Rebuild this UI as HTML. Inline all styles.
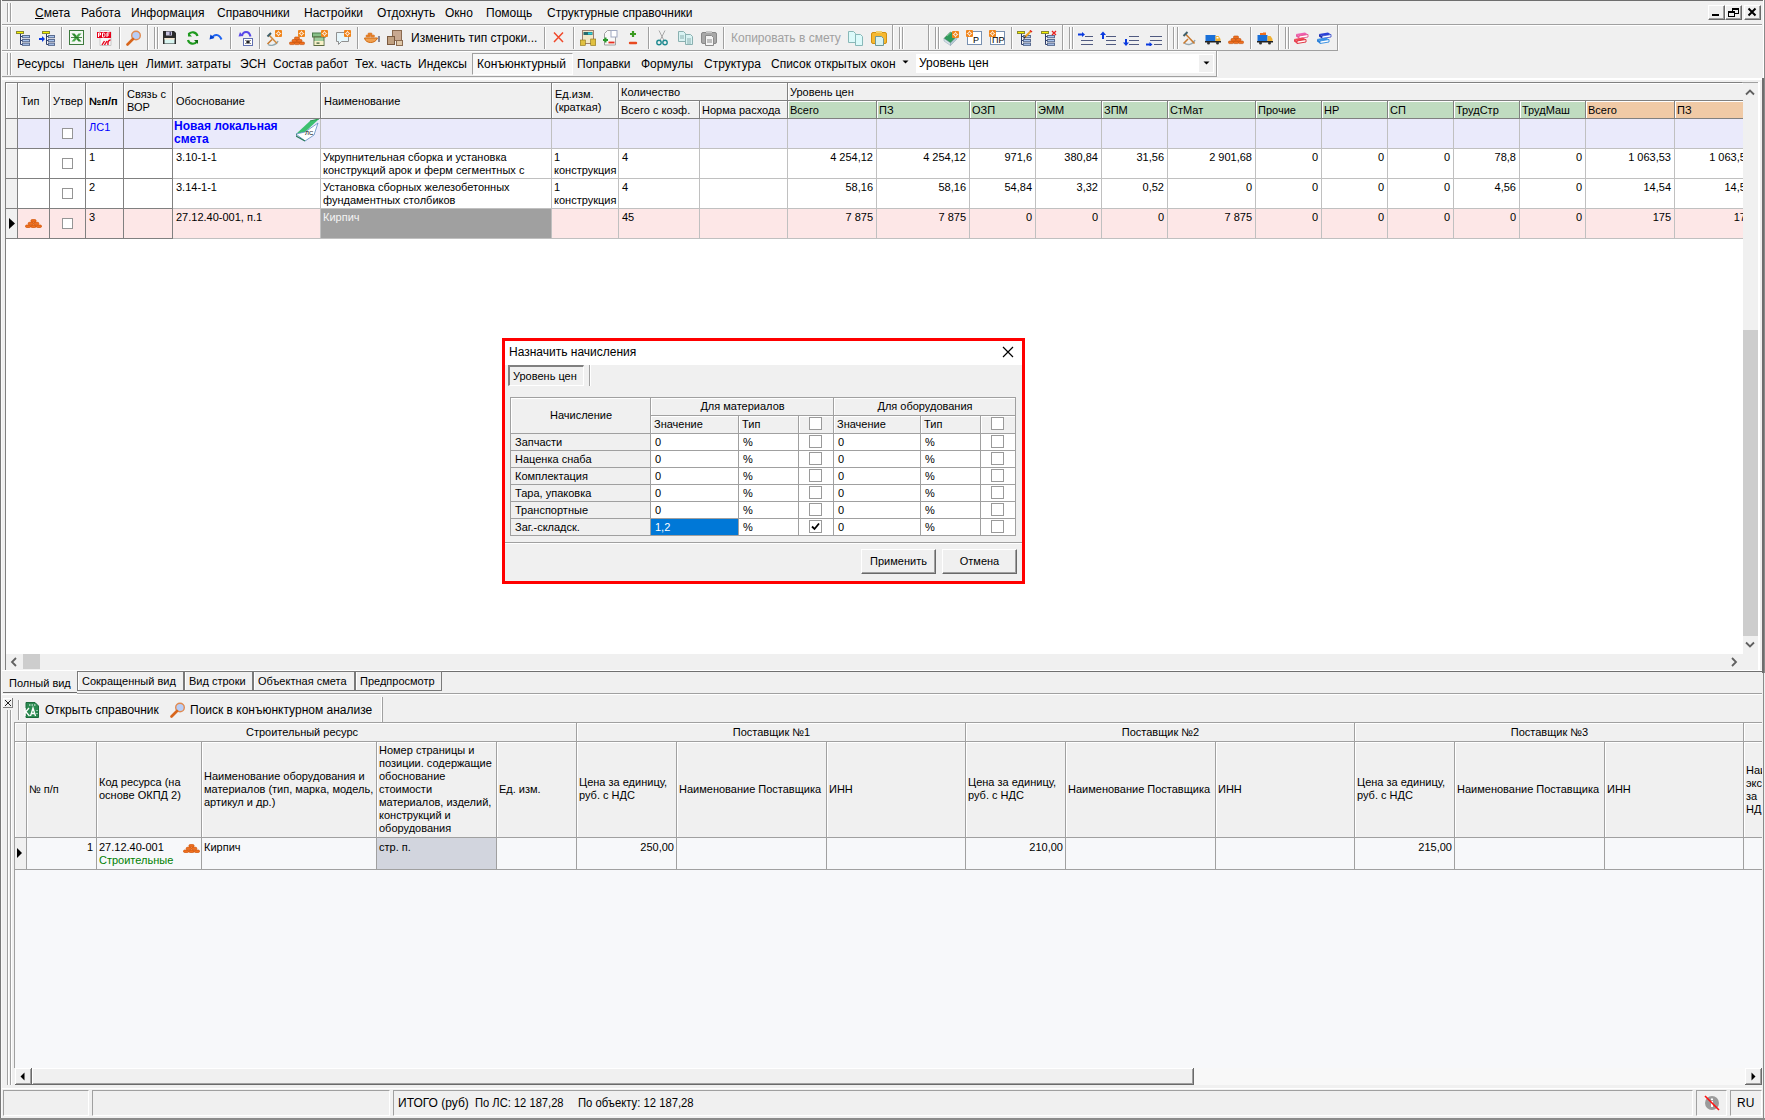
<!DOCTYPE html><html><head><meta charset="utf-8"><style>
*{box-sizing:border-box;margin:0;padding:0}
html,body{width:1765px;height:1120px;overflow:hidden;background:#f0f0f0;font-family:"Liberation Sans",sans-serif;color:#000}
.a{position:absolute}
.t12{font-size:12px;line-height:16px;white-space:nowrap}
.t11{font-size:11px;line-height:13px;white-space:nowrap}
.hl{position:absolute;height:1px}
.vl{position:absolute;width:1px}
.grip{position:absolute;width:2px;border-left:1px solid #a0a0a0;border-right:1px solid #fff}
.sep{position:absolute;width:2px;border-left:1px solid #a0a0a0;border-right:1px solid #fff}
.ic{position:absolute;width:16px;height:16px}
.hc{position:absolute;background:#f0f0f0;border-right:1px solid #808080;border-bottom:1px solid #808080;box-shadow:inset 1px 1px 0 #fff;overflow:hidden}
.dc{position:absolute;border-right:1px solid #c0c0c0;border-bottom:1px solid #c0c0c0;overflow:hidden}
.dk{border-color:#808080}
.lg{border-color:#a0a0a0 !important}
.cb{position:absolute;width:11px;height:11px;border:1px solid #959595;background:#fff}
</style></head><body>
<div class="a" style="left:0;top:0;width:1765px;height:1px;background:#6e6e6e"></div>
<div class="a" style="left:0;top:0;width:1px;height:1120px;background:#787878"></div>
<div class="a" style="left:1px;top:0;width:1px;height:1120px;background:#fafafa"></div>
<div class="grip" style="left:7px;top:3px;height:19px"></div>
<div class="grip" style="left:10px;top:3px;height:19px"></div>
<div class="a t12" style="left:35px;top:5px"><u>С</u>мета</div>
<div class="a t12" style="left:81px;top:5px">Работа</div>
<div class="a t12" style="left:131px;top:5px">Информация</div>
<div class="a t12" style="left:217px;top:5px">Справочники</div>
<div class="a t12" style="left:304px;top:5px">Настройки</div>
<div class="a t12" style="left:377px;top:5px">Отдохнуть</div>
<div class="a t12" style="left:445px;top:5px">Окно</div>
<div class="a t12" style="left:486px;top:5px">Помощь</div>
<div class="a t12" style="left:547px;top:5px">Структурные справочники</div>
<div class="a" style="left:1708px;top:5px;width:17px;height:15px;background:#f0f0f0;border-top:1px solid #fff;border-left:1px solid #fff;border-right:1px solid #6a6a6a;border-bottom:1px solid #6a6a6a;box-shadow:inset -1px -1px 0 #a0a0a0"></div>
<div class="a" style="left:1725px;top:5px;width:17px;height:15px;background:#f0f0f0;border-top:1px solid #fff;border-left:1px solid #fff;border-right:1px solid #6a6a6a;border-bottom:1px solid #6a6a6a;box-shadow:inset -1px -1px 0 #a0a0a0"></div>
<div class="a" style="left:1744px;top:5px;width:17px;height:15px;background:#f0f0f0;border-top:1px solid #fff;border-left:1px solid #fff;border-right:1px solid #6a6a6a;border-bottom:1px solid #6a6a6a;box-shadow:inset -1px -1px 0 #a0a0a0"></div>
<svg class="a" style="left:1708px;top:5px" width="17" height="15"><rect x="4" y="9" width="7" height="2" fill="#000"/></svg>
<svg class="a" style="left:1725px;top:5px" width="17" height="15"><rect x="7.5" y="3.5" width="6" height="5" fill="none" stroke="#000"/><rect x="7" y="3" width="7" height="2" fill="#000"/><rect x="3.5" y="6.5" width="6" height="5" fill="#f0f0f0" stroke="#000"/><rect x="3" y="6" width="7" height="2" fill="#000"/></svg>
<svg class="a" style="left:1744px;top:5px" width="17" height="15"><path d="M4.5 3.5 L11.5 10.5 M11.5 3.5 L4.5 10.5" stroke="#000" stroke-width="2"/></svg>
<div class="a" style="left:2px;top:24px;width:1760px;height:1px;background:#a0a0a0"></div>
<div class="a" style="left:2px;top:25px;width:1760px;height:1px;background:#fff"></div>
<div class="a" style="left:2px;top:50px;width:1336px;height:1px;background:#a0a0a0"></div>
<div class="a" style="left:2px;top:51px;width:1214px;height:1px;background:#fff"></div>
<div class="a" style="left:2px;top:76px;width:1215px;height:1px;background:#a0a0a0"></div>
<div class="a" style="left:2px;top:78px;width:1760px;height:2px;background:#fff"></div>
<div class="grip" style="left:7px;top:27px;height:22px"></div>
<div class="grip" style="left:10px;top:27px;height:22px"></div>
<svg class="a" style="left:16px;top:30px" width="16" height="16" viewBox="0 0 16 16"><rect x="0.5" y="1.5" width="7" height="2" fill="#f4f000" stroke="#8a8a30"/><path d="M4.5 4v10.5M4.5 6.5h2M4.5 10.5h2M4.5 14.5h2" stroke="#2e3e6a" fill="none"/><rect x="6.5" y="5.5" width="7" height="2.2" fill="#a9c4ee" stroke="#5a6c90"/><rect x="6.5" y="9.5" width="7" height="2.2" fill="#a9c4ee" stroke="#5a6c90"/><rect x="6.5" y="13.2" width="7" height="2.2" fill="#a9c4ee" stroke="#5a6c90"/></svg>
<svg class="a" style="left:39px;top:30px" width="16" height="16" viewBox="0 0 16 16"><path d="M0 9h4" stroke="#0a3ae0" stroke-width="2"/><path d="M3 6l3 3-3 3z" fill="#0a3ae0"/><rect x="3.5" y="1.5" width="7" height="2" fill="#f4f000" stroke="#8a8a30"/><path d="M7.5 4v10.5M7.5 6.5h2M7.5 10.5h2M7.5 14.5h2" stroke="#2e3e6a" fill="none"/><rect x="9.5" y="5.5" width="6" height="2.2" fill="#a9c4ee" stroke="#5a6c90"/><rect x="9.5" y="9.5" width="6" height="2.2" fill="#a9c4ee" stroke="#5a6c90"/><rect x="9.5" y="13.2" width="6" height="2.2" fill="#a9c4ee" stroke="#5a6c90"/></svg>
<div class="sep" style="left:61px;top:27px;height:22px"></div>
<svg class="a" style="left:69px;top:30px" width="16" height="16" viewBox="0 0 16 16"><rect x="0.5" y="0.5" width="14" height="14" fill="#f4f8f4" stroke="#3d7a3d"/><path d="M2.5 3.5h3l7 8h-3z" fill="#2f8a2f"/><path d="M12.5 3.5h-3l-7 8h3z" fill="#4aaa4a"/><path d="M2 7.5h11" stroke="#1a6a1a" stroke-width="0.8"/></svg>
<div class="sep" style="left:90px;top:27px;height:22px"></div>
<svg class="a" style="left:97px;top:30px" width="16" height="16" viewBox="0 0 16 16"><path d="M3 0.5h9l2 2v13H3z" fill="#f8f8f8" stroke="#c8c8c8"/><rect x="0" y="2" width="14" height="6" fill="#e8001a"/><path d="M1.5 7V3h2v2h-2M5.5 7V3h1.2c1 0 1.3 1 1.3 2s-.3 2-1.3 2zM10 7V3h2.5M10 5h2" stroke="#fff" stroke-width="1" fill="none"/><path d="M5 15l2.5-4M7.5 15l2.5-4M13.5 10c-2 0-3 2-2.5 5" stroke="#e8001a" stroke-width="1.4" fill="none"/></svg>
<div class="sep" style="left:119px;top:27px;height:22px"></div>
<svg class="a" style="left:126px;top:30px" width="16" height="16" viewBox="0 0 16 16"><circle cx="10" cy="5.5" r="4.3" fill="#b8cdf6" stroke="#e08a50" stroke-width="1.4"/><path d="M7 9l-5.5 5.5" stroke="#d8661c" stroke-width="2.6" stroke-linecap="round"/></svg>
<div class="sep" style="left:147px;top:25px;height:25px"></div>
<div class="grip" style="left:154px;top:27px;height:22px"></div>
<div class="grip" style="left:157px;top:27px;height:22px"></div>
<svg class="a" style="left:162px;top:30px" width="16" height="16" viewBox="0 0 16 16"><path d="M1 1h11l2 2v11H1z" fill="#2a2a2a"/><rect x="4" y="1.5" width="6" height="4" fill="#c8c4de"/><rect x="7.5" y="2" width="1.5" height="3" fill="#504c70"/><rect x="2.5" y="8" width="10" height="5.5" fill="#d8f4f0"/><rect x="2.5" y="8" width="10" height="1.5" fill="#f8e6d0"/></svg>
<svg class="a" style="left:185px;top:30px" width="16" height="16" viewBox="0 0 16 16"><path d="M12.5 6A5 5 0 0 0 3.5 4.5" stroke="#1e9a1e" stroke-width="2.2" fill="none"/><path d="M3 2.5v4h4z" fill="#1e9a1e"/><path d="M3 10A5 5 0 0 0 12 11.5" stroke="#1e9a1e" stroke-width="2.2" fill="none"/><path d="M13 14v-4H9z" fill="#107010"/></svg>
<svg class="a" style="left:208px;top:30px" width="16" height="16" viewBox="0 0 16 16"><path d="M4 8C6 4 11 3.5 13.5 9.5" stroke="#1e64f0" stroke-width="2" fill="none"/><path d="M1.5 9.5l1-5 4 3.5z" fill="#0040d0"/></svg>
<div class="sep" style="left:230px;top:27px;height:22px"></div>
<svg class="a" style="left:238px;top:30px" width="16" height="16" viewBox="0 0 16 16"><path d="M4 6C5 1 11 0 12.5 6.5" stroke="#5848e8" stroke-width="2" fill="none"/><path d="M0.5 6.5l1.5-4.5 3 4z" fill="#5848e8"/><rect x="5.5" y="8.5" width="9" height="7" fill="#fff" stroke="#6070b0"/><path d="M7.5 10.5l5 3M12.5 10.5l-5 3M10 10v4" stroke="#101010" stroke-width="1"/></svg>
<div class="sep" style="left:259px;top:27px;height:22px"></div>
<svg class="a" style="left:266px;top:30px" width="16" height="16" viewBox="0 0 16 16"><path d="M2 14.5C4 16 10 16 12 11" stroke="#90a8b0" stroke-width="1.4" fill="none"/><path d="M1.5 14L6 9.5" stroke="#c87a30" stroke-width="1.6"/><path d="M3 5l8 8.5" stroke="#d08a40" stroke-width="1.6"/><path d="M1.5 6.5L5 3" stroke="#40606a" stroke-width="2"/><rect x="9" y="0" width="7" height="7" rx="1" fill="#f0841a"/><circle cx="12.5" cy="3.5" r="1.5" fill="none" stroke="#fff" stroke-width="0.9"/><path d="M12.5 0.8v1M12.5 5.2v1M9.8 3.5h1M14.2 3.5h1" stroke="#fff" stroke-width="0.8"/></svg>
<svg class="a" style="left:289px;top:30px" width="16" height="16" viewBox="0 0 16 16"><g fill="#f07020" stroke="#c04a00" stroke-width="0.6"><rect x="0.5" y="12" width="5" height="2.6" rx="1"/><rect x="5.5" y="12" width="5" height="2.6" rx="1"/><rect x="10.5" y="12" width="5" height="2.6" rx="1"/><rect x="3" y="9.5" width="5" height="2.6" rx="1"/><rect x="8" y="9.5" width="5" height="2.6" rx="1"/><rect x="5.5" y="7" width="5" height="2.6" rx="1"/></g><rect x="9" y="0" width="7" height="7" rx="1" fill="#f0841a"/><circle cx="12.5" cy="3.5" r="1.5" fill="none" stroke="#fff" stroke-width="0.9"/><path d="M12.5 0.8v1M12.5 5.2v1M9.8 3.5h1M14.2 3.5h1" stroke="#fff" stroke-width="0.8"/></svg>
<svg class="a" style="left:312px;top:30px" width="16" height="16" viewBox="0 0 16 16"><rect x="0.5" y="3" width="13" height="4" fill="#88c088" stroke="#4a7a4a"/><rect x="2" y="7" width="10" height="8.5" fill="#9ccc9c" stroke="#5a6a40"/><rect x="2.5" y="11" width="9" height="4" fill="#f8f0c8"/><rect x="4.5" y="12.5" width="3" height="1.2" fill="#305030"/><rect x="9" y="0" width="7" height="7" rx="1" fill="#f0841a"/><circle cx="12.5" cy="3.5" r="1.5" fill="none" stroke="#fff" stroke-width="0.9"/><path d="M12.5 0.8v1M12.5 5.2v1M9.8 3.5h1M14.2 3.5h1" stroke="#fff" stroke-width="0.8"/></svg>
<svg class="a" style="left:335px;top:30px" width="16" height="16" viewBox="0 0 16 16"><path d="M1.5 2.5h12v9h-7l-3 3v-3h-2z" fill="#e6f6fb" stroke="#909090"/><rect x="9" y="0" width="7" height="7" rx="1" fill="#f0841a"/><circle cx="12.5" cy="3.5" r="1.5" fill="none" stroke="#fff" stroke-width="0.9"/><path d="M12.5 0.8v1M12.5 5.2v1M9.8 3.5h1M14.2 3.5h1" stroke="#fff" stroke-width="0.8"/></svg>
<div class="sep" style="left:357px;top:27px;height:22px"></div>
<svg class="a" style="left:364px;top:30px" width="16" height="16" viewBox="0 0 16 16"><path d="M0.5 8c1 6 11 6 13 0z" fill="#f0a050" stroke="#d06a10"/><g fill="#f08a30" stroke="#c86010" stroke-width="0.5"><rect x="2" y="5" width="4" height="2" rx="0.8"/><rect x="6.5" y="5" width="4" height="2" rx="0.8"/><rect x="4" y="3" width="4" height="2" rx="0.8"/></g><path d="M15 6v6" stroke="#202040" stroke-width="1"/></svg>
<svg class="a" style="left:387px;top:30px" width="16" height="16" viewBox="0 0 16 16"><rect x="5.5" y="0.5" width="9" height="10" fill="#c8a890" stroke="#8a6a50"/><rect x="0.5" y="6.5" width="7" height="8" fill="#c0a080" stroke="#7a5a40"/><rect x="9.5" y="10.5" width="6" height="5" fill="#e0c8a8" stroke="#8a6a50"/></svg>
<div class="a t12" style="left:411px;top:30px">Изменить тип строки...</div>
<div class="sep" style="left:544px;top:27px;height:22px"></div>
<svg class="a" style="left:552px;top:30px" width="16" height="16" viewBox="0 0 16 16"><path d="M2 2.5l9 9.5M11 2.5l-9 9.5" stroke="#f0482a" stroke-width="1.5"/></svg>
<div class="sep" style="left:573px;top:27px;height:22px"></div>
<svg class="a" style="left:580px;top:30px" width="16" height="16" viewBox="0 0 16 16"><rect x="2.5" y="0.5" width="11" height="13" fill="#f2e8c8" stroke="#a08070"/><rect x="3.5" y="2" width="9" height="3" fill="#2a6a6a"/><rect x="8" y="2.5" width="4" height="2" fill="#30d0e0"/><g fill="#e0c040" stroke="#8a7010" stroke-width="0.6"><rect x="0.3" y="10" width="5" height="5.5"/><rect x="10.7" y="9" width="5" height="6.5"/></g></svg>
<svg class="a" style="left:603px;top:30px" width="16" height="16" viewBox="0 0 16 16"><path d="M1.5 3.5l3-3h8v14.5h-11z" fill="#f8f8f8" stroke="#a0a0a0"/><rect x="8" y="0.5" width="6" height="6.5" fill="#fff" stroke="#a0a8c0"/><path d="M0 10h5M2.5 7.5v5" stroke="#2a9a2a" stroke-width="2"/><path d="M5.5 12.5h6" stroke="#e83020" stroke-width="1.8"/></svg>
<svg class="a" style="left:625px;top:30px" width="16" height="16" viewBox="0 0 16 16"><path d="M8 1v6M5 4h6" stroke="#3a9a20" stroke-width="2.2"/><path d="M5 13h6" stroke="#e84a20" stroke-width="2.4" stroke-linecap="round"/></svg>
<div class="sep" style="left:648px;top:27px;height:22px"></div>
<svg class="a" style="left:654px;top:30px" width="16" height="16" viewBox="0 0 16 16"><path d="M5 0.5l5 10M11 0.5l-5 10" stroke="#a8a8a8" stroke-width="1"/><circle cx="5" cy="12.5" r="2.2" fill="none" stroke="#208a90" stroke-width="1.4"/><circle cx="11" cy="12.5" r="2.2" fill="none" stroke="#208a90" stroke-width="1.4"/></svg>
<svg class="a" style="left:678px;top:30px" width="16" height="16" viewBox="0 0 16 16"><path d="M0.5 1.5h5l2 2v8h-7z" fill="#d8f2f2" stroke="#8ab0b0"/><path d="M7.5 4.5h5l2 2v8h-7z" fill="#d8f2f2" stroke="#8ab0b0"/><path d="M9 9h4M9 11h4M9 13h4M2 6h4M2 8h4" stroke="#8ab0b0"/></svg>
<svg class="a" style="left:701px;top:30px" width="16" height="16" viewBox="0 0 16 16"><rect x="0.5" y="2.5" width="15" height="11" rx="1.5" fill="#a8a8a8" stroke="#888"/><rect x="5" y="1" width="6" height="2" fill="#c8c8c8"/><path d="M4.5 5.5h6l2 2v8h-8z" fill="#f4f4f4" stroke="#8a8a8a"/><path d="M6 10h5M6 12h5" stroke="#8a8a8a"/></svg>
<div class="sep" style="left:723px;top:27px;height:22px"></div>
<div class="a t12" style="left:731px;top:30px;color:#a0a0a0">Копировать в смету</div>
<svg class="a" style="left:848px;top:30px" width="16" height="16" viewBox="0 0 16 16"><path d="M0.5 1.5h5l2 2v9h-7z" fill="#dcfafa" stroke="#88b8b8"/><path d="M7.5 4.5h5l2 2v9h-7z" fill="#dcfafa" stroke="#88b8b8"/></svg>
<svg class="a" style="left:871px;top:30px" width="16" height="16" viewBox="0 0 16 16"><rect x="0.5" y="2.5" width="15" height="11" rx="1.5" fill="#f6b830" stroke="#d09010"/><rect x="5" y="1" width="6" height="2" fill="#f0d070"/><path d="M4.5 6.5h6l2 2v7h-8z" fill="#d8f2f2" stroke="#709898"/></svg>
<div class="sep" style="left:892px;top:25px;height:25px"></div>
<div class="grip" style="left:899px;top:27px;height:22px"></div>
<div class="grip" style="left:902px;top:27px;height:22px"></div>
<div class="sep" style="left:928px;top:25px;height:25px"></div>
<div class="grip" style="left:935px;top:27px;height:22px"></div>
<div class="grip" style="left:938px;top:27px;height:22px"></div>
<svg class="a" style="left:943px;top:30px" width="16" height="16" viewBox="0 0 16 16"><path d="M1 8.5L7.5 2 14 6.5 7.5 13z" fill="#2f9a5a" stroke="#1f6a3a" stroke-width="0.6"/><path d="M4 6l4-3.5" stroke="#7ac890" stroke-width="1"/><path d="M1 8.5l6.5 4.5v2.5L1 11z" fill="#d8e4ea" stroke="#8aa0b0" stroke-width="0.5"/><path d="M7.5 13L14 6.5V9l-6.5 6.5z" fill="#b8ccd6" stroke="#8aa0b0" stroke-width="0.5"/><rect x="9" y="1" width="7" height="7" rx="1" fill="#f0841a"/><circle cx="12.5" cy="4.5" r="1.5" fill="none" stroke="#fff" stroke-width="0.9"/><path d="M12.5 1.8v1M12.5 6.2v1M9.8 4.5h1M14.2 4.5h1" stroke="#fff" stroke-width="0.8"/></svg>
<svg class="a" style="left:966px;top:30px" width="16" height="16" viewBox="0 0 16 16"><rect x="1.5" y="1.5" width="14" height="13" fill="#fff" stroke="#7890b0"/><text x="7" y="13" font-size="9" font-family="Liberation Sans" fill="#000">P</text><rect x="0" y="0" width="7" height="7" rx="1" fill="#f0841a"/><circle cx="3.5" cy="3.5" r="1.5" fill="none" stroke="#fff" stroke-width="0.9"/><path d="M3.5 0.8v1M3.5 5.2v1M0.8 3.5h1M5.2 3.5h1" stroke="#fff" stroke-width="0.8"/></svg>
<svg class="a" style="left:989px;top:30px" width="16" height="16" viewBox="0 0 16 16"><rect x="1.5" y="1.5" width="14" height="13" fill="#fff" stroke="#7890b0"/><text x="3" y="13" font-size="9" font-family="Liberation Sans" fill="#000">ПР</text><rect x="0" y="0" width="7" height="7" rx="1" fill="#f0841a"/><circle cx="3.5" cy="3.5" r="1.5" fill="none" stroke="#fff" stroke-width="0.9"/><path d="M3.5 0.8v1M3.5 5.2v1M0.8 3.5h1M5.2 3.5h1" stroke="#fff" stroke-width="0.8"/></svg>
<div class="sep" style="left:1011px;top:27px;height:22px"></div>
<svg class="a" style="left:1017px;top:30px" width="16" height="16" viewBox="0 0 16 16"><rect x="0.5" y="1.5" width="7" height="2" fill="#f4f000" stroke="#8a8a30"/><path d="M4.5 4v10.5M4.5 6.5h2M4.5 10.5h2M4.5 14.5h2" stroke="#2e3e6a" fill="none"/><rect x="6.5" y="5.5" width="7" height="2.2" fill="#a9c4ee" stroke="#5a6c90"/><rect x="6.5" y="9.5" width="7" height="2.2" fill="#a9c4ee" stroke="#5a6c90"/><rect x="6.5" y="13.2" width="7" height="2.2" fill="#a9c4ee" stroke="#5a6c90"/><path d="M8 7l6-6" stroke="#f0a020" stroke-width="2"/><path d="M13 0.5l2 1.5" stroke="#e02020" stroke-width="1.5"/><path d="M7 8.5l1.5-2" stroke="#202020" stroke-width="1.2"/></svg>
<svg class="a" style="left:1041px;top:30px" width="16" height="16" viewBox="0 0 16 16"><rect x="0.5" y="1.5" width="7" height="2" fill="#f4f000" stroke="#8a8a30"/><path d="M4.5 4v10.5M4.5 6.5h2M4.5 10.5h2M4.5 14.5h2" stroke="#2e3e6a" fill="none"/><rect x="6.5" y="5.5" width="7" height="2.2" fill="#a9c4ee" stroke="#5a6c90"/><rect x="6.5" y="9.5" width="7" height="2.2" fill="#a9c4ee" stroke="#5a6c90"/><rect x="6.5" y="13.2" width="7" height="2.2" fill="#a9c4ee" stroke="#5a6c90"/><path d="M11 1l4 4M15 1l-4 4" stroke="#e82020" stroke-width="1.3"/></svg>
<div class="sep" style="left:1062px;top:25px;height:25px"></div>
<div class="grip" style="left:1069px;top:27px;height:22px"></div>
<div class="grip" style="left:1072px;top:27px;height:22px"></div>
<svg class="a" style="left:1077px;top:30px" width="16" height="16" viewBox="0 0 16 16"><path d="M1 4.5h5" stroke="#0a3ae0" stroke-width="2"/><path d="M5 2l3 2.5-3 2.5z" fill="#0a3ae0"/><path d="M8 6.5h8M4 10.5h12M4 14.5h12" stroke="#505a80" stroke-width="1.2"/></svg>
<svg class="a" style="left:1100px;top:30px" width="16" height="16" viewBox="0 0 16 16"><path d="M3 4v5" stroke="#0a3ae0" stroke-width="2"/><path d="M0 5l3-3.5 3 3.5z" fill="#0a3ae0"/><path d="M6 6.5h10M6 10.5h10M6 14.5h10" stroke="#505a80" stroke-width="1.2"/></svg>
<svg class="a" style="left:1123px;top:30px" width="16" height="16" viewBox="0 0 16 16"><path d="M3 9v4" stroke="#0a3ae0" stroke-width="2"/><path d="M0 12.5l3 3.5 3-3.5z" fill="#0a3ae0"/><path d="M6 6.5h10M6 10.5h10M6 14.5h10" stroke="#505a80" stroke-width="1.2"/></svg>
<svg class="a" style="left:1146px;top:30px" width="16" height="16" viewBox="0 0 16 16"><path d="M0 14.5h4" stroke="#0a3ae0" stroke-width="2"/><path d="M3.5 12l3 2.5-3 2.5z" fill="#0a3ae0"/><path d="M4 6.5h12M4 10.5h12M8 14.5h8" stroke="#505a80" stroke-width="1.2"/></svg>
<div class="sep" style="left:1167px;top:25px;height:25px"></div>
<div class="grip" style="left:1173px;top:27px;height:22px"></div>
<div class="grip" style="left:1177px;top:27px;height:22px"></div>
<svg class="a" style="left:1182px;top:30px" width="16" height="16" viewBox="0 0 16 16"><path d="M2.5 13C5 15.5 11 15 13 10" stroke="#98a8b0" stroke-width="1.4" fill="none"/><path d="M1.5 13.5L6 9" stroke="#c87a30" stroke-width="1.6"/><path d="M3.5 4l9 9.5" stroke="#c87a30" stroke-width="1.6"/><path d="M1.5 6L5.5 2" stroke="#40606a" stroke-width="2"/></svg>
<svg class="a" style="left:1205px;top:30px" width="16" height="16" viewBox="0 0 16 16"><rect x="0.5" y="5" width="10" height="6" fill="#1a70d8"/><path d="M10.5 6h3l2 3v2h-5z" fill="#f0b030"/><rect x="11.5" y="7" width="2" height="1.5" fill="#fff"/><rect x="0" y="11" width="16" height="1.5" fill="#202020"/><circle cx="3.5" cy="13" r="1.5" fill="#303030"/><circle cx="12.5" cy="13" r="1.5" fill="#303030"/></svg>
<svg class="a" style="left:1228px;top:30px" width="16" height="16" viewBox="0 0 16 16"><g fill="#f07020" stroke="#c04a00" stroke-width="0.6"><rect x="0.5" y="11" width="5" height="2.6" rx="1"/><rect x="5.5" y="11" width="5" height="2.6" rx="1"/><rect x="10.5" y="11" width="5" height="2.6" rx="1"/><rect x="3" y="8.5" width="5" height="2.6" rx="1"/><rect x="8" y="8.5" width="5" height="2.6" rx="1"/><rect x="5.5" y="6" width="5" height="2.6" rx="1"/></g></svg>
<div class="sep" style="left:1250px;top:27px;height:22px"></div>
<svg class="a" style="left:1257px;top:30px" width="16" height="16" viewBox="0 0 16 16"><rect x="0.5" y="5" width="10" height="6" fill="#1a70d8"/><g fill="#f07020"><rect x="3" y="3" width="3" height="2"/><rect x="6" y="2.5" width="3" height="2.5"/></g><path d="M10.5 6h3l2 3v2h-5z" fill="#f0b030"/><rect x="0" y="11" width="16" height="1.5" fill="#202020"/><circle cx="3.5" cy="13" r="1.5" fill="#303030"/><circle cx="12.5" cy="13" r="1.5" fill="#303030"/></svg>
<div class="sep" style="left:1278px;top:25px;height:25px"></div>
<div class="grip" style="left:1285px;top:27px;height:22px"></div>
<div class="grip" style="left:1288px;top:27px;height:22px"></div>
<svg class="a" style="left:1293px;top:30px" width="16" height="16" viewBox="0 0 16 16"><path d="M3 4l9-1.5 3 2-9 1.5z" fill="#f060b0"/><path d="M6 6l9-1.5v2.5l-9 1.5z" fill="#fff" stroke="#e04080" stroke-width="0.8"/><path d="M3 4l3 2v2.5l-3-2z" fill="#e85aa0"/><path d="M1 9l9-1.5 3 2-9 1.5z" fill="#f04858"/><path d="M4 11l9-1.5v2.5l-9 1.5z" fill="#fff" stroke="#e02030" stroke-width="0.9"/><path d="M1 9l3 2v2.5l-3-2z" fill="#e84050"/></svg>
<svg class="a" style="left:1316px;top:30px" width="16" height="16" viewBox="0 0 16 16"><path d="M3 4l9-1.5 3 2-9 1.5z" fill="#2a40d8"/><path d="M6 6l9-1.5v2.5l-9 1.5z" fill="#fff" stroke="#2a40c8" stroke-width="0.8"/><path d="M3 4l3 2v2.5l-3-2z" fill="#2030b0"/><path d="M1 9l9-1.5 3 2-9 1.5z" fill="#3a90e8"/><path d="M4 11l9-1.5v2.5l-9 1.5z" fill="#fff" stroke="#2a88e0" stroke-width="0.9"/><path d="M1 9l3 2v2.5l-3-2z" fill="#2a80d8"/></svg>
<div class="sep" style="left:1337px;top:25px;height:25px"></div>
<div class="grip" style="left:7px;top:53px;height:22px"></div>
<div class="grip" style="left:10px;top:53px;height:22px"></div>
<div class="a" style="left:472px;top:53px;width:101px;height:22px;background:#f8f8f8;border-top:1px solid #a0a0a0;border-left:1px solid #a0a0a0;border-right:1px solid #fff;border-bottom:1px solid #fff"></div>
<div class="a t12" style="left:17px;top:56px">Ресурсы</div>
<div class="a t12" style="left:73px;top:56px">Панель цен</div>
<div class="a t12" style="left:146px;top:56px">Лимит. затраты</div>
<div class="a t12" style="left:240px;top:56px">ЭСН</div>
<div class="a t12" style="left:273px;top:56px">Состав работ</div>
<div class="a t12" style="left:355px;top:56px">Тех. часть</div>
<div class="a t12" style="left:418px;top:56px">Индексы</div>
<div class="a t12" style="left:477px;top:56px">Конъюнктурный</div>
<div class="a t12" style="left:577px;top:56px">Поправки</div>
<div class="a t12" style="left:641px;top:56px">Формулы</div>
<div class="a t12" style="left:704px;top:56px">Структура</div>
<div class="a t12" style="left:771px;top:56px">Список открытых окон</div>
<svg class="a" style="left:902px;top:60px" width="8" height="5"><path d="M0.5 0.5h6l-3 3z" fill="#000"/></svg>
<div class="a" style="left:916px;top:54px;width:298px;height:19px;background:#fff"></div>
<div class="a t12" style="left:919px;top:55px">Уровень цен</div>
<div class="a" style="left:1199px;top:55px;width:14px;height:17px;background:#f0f0f0"></div>
<svg class="a" style="left:1203px;top:61px" width="8" height="5"><path d="M0.5 0.5h6l-3 3z" fill="#000"/></svg>
<div class="sep" style="left:1216px;top:51px;height:25px"></div>
<div class="a" style="left:2px;top:80px;width:1760px;height:592px;background:#f0f0f0"></div>
<div class="a" style="left:5px;top:82px;width:1738px;height:572px;background:#fff;border-left:1px solid #808080;border-top:1px solid #808080;overflow:hidden">
<div class="hc" style="left:0px;top:0px;width:12px;height:36px;background:#f0f0f0;"></div>
<div class="hc" style="left:12px;top:0px;width:32px;height:36px;background:#f0f0f0;"></div>
<div class="a t11" style="left:15px;top:12px;line-height:13px">Тип</div>
<div class="hc" style="left:44px;top:0px;width:36px;height:36px;background:#f0f0f0;"></div>
<div class="a t11" style="left:47px;top:12px;line-height:13px">Утвер</div>
<div class="hc" style="left:80px;top:0px;width:38px;height:36px;background:#f0f0f0;"></div>
<div class="a t11" style="left:83px;top:12px;line-height:13px"><b>№п/п</b></div>
<div class="hc" style="left:118px;top:0px;width:49px;height:36px;background:#f0f0f0;"></div>
<div class="a t11" style="left:121px;top:5px;line-height:13px">Связь с<br>ВОР</div>
<div class="hc" style="left:167px;top:0px;width:148px;height:36px;background:#f0f0f0;"></div>
<div class="a t11" style="left:170px;top:12px;line-height:13px">Обоснование</div>
<div class="hc" style="left:315px;top:0px;width:231px;height:36px;background:#f0f0f0;"></div>
<div class="a t11" style="left:318px;top:12px;line-height:13px">Наименование</div>
<div class="hc" style="left:546px;top:0px;width:67px;height:36px;background:#f0f0f0;"></div>
<div class="a t11" style="left:549px;top:5px;line-height:13px">Ед.изм.<br>(краткая)</div>
<div class="hc" style="left:613px;top:0px;width:169px;height:18px;background:#f0f0f0;"></div>
<div class="a t11" style="left:615px;top:3px;">Количество</div>
<div class="hc" style="left:613px;top:18px;width:81px;height:18px;background:#f0f0f0;"></div>
<div class="a t11" style="left:615px;top:21px;">Всего с коэф.</div>
<div class="hc" style="left:694px;top:18px;width:88px;height:18px;background:#f0f0f0;"></div>
<div class="a t11" style="left:696px;top:21px;">Норма расхода</div>
<div class="hc" style="left:782px;top:0px;width:1013px;height:18px;background:#f0f0f0;"></div>
<div class="a t11" style="left:784px;top:3px;">Уровень цен</div>
<div class="hc" style="left:782px;top:18px;width:89px;height:18px;background:#c0dcc0;"></div>
<div class="a t11" style="left:784px;top:21px;">Всего</div>
<div class="hc" style="left:871px;top:18px;width:93px;height:18px;background:#c0dcc0;"></div>
<div class="a t11" style="left:873px;top:21px;">ПЗ</div>
<div class="hc" style="left:964px;top:18px;width:66px;height:18px;background:#c0dcc0;"></div>
<div class="a t11" style="left:966px;top:21px;">ОЗП</div>
<div class="hc" style="left:1030px;top:18px;width:66px;height:18px;background:#c0dcc0;"></div>
<div class="a t11" style="left:1032px;top:21px;">ЭММ</div>
<div class="hc" style="left:1096px;top:18px;width:66px;height:18px;background:#c0dcc0;"></div>
<div class="a t11" style="left:1098px;top:21px;">ЗПМ</div>
<div class="hc" style="left:1162px;top:18px;width:88px;height:18px;background:#c0dcc0;"></div>
<div class="a t11" style="left:1164px;top:21px;">СтМат</div>
<div class="hc" style="left:1250px;top:18px;width:66px;height:18px;background:#c0dcc0;"></div>
<div class="a t11" style="left:1252px;top:21px;">Прочие</div>
<div class="hc" style="left:1316px;top:18px;width:66px;height:18px;background:#c0dcc0;"></div>
<div class="a t11" style="left:1318px;top:21px;">НР</div>
<div class="hc" style="left:1382px;top:18px;width:66px;height:18px;background:#c0dcc0;"></div>
<div class="a t11" style="left:1384px;top:21px;">СП</div>
<div class="hc" style="left:1448px;top:18px;width:66px;height:18px;background:#c0dcc0;"></div>
<div class="a t11" style="left:1450px;top:21px;">ТрудСтр</div>
<div class="hc" style="left:1514px;top:18px;width:66px;height:18px;background:#c0dcc0;"></div>
<div class="a t11" style="left:1516px;top:21px;">ТрудМаш</div>
<div class="hc" style="left:1580px;top:18px;width:89px;height:18px;background:#f0caa6;"></div>
<div class="a t11" style="left:1582px;top:21px;">Всего</div>
<div class="hc" style="left:1669px;top:18px;width:81px;height:18px;background:#f0caa6;"></div>
<div class="a t11" style="left:1671px;top:21px;">ПЗ</div>
<div class="dc dk" style="left:0px;top:36px;width:12px;height:30px;background:#f0f0f0;"></div>
<div class="dc dk" style="left:12px;top:36px;width:32px;height:30px;background:#eaeafb;"></div>
<div class="dc dk" style="left:44px;top:36px;width:36px;height:30px;background:#eaeafb;"></div>
<div class="dc dk" style="left:80px;top:36px;width:38px;height:30px;background:#eaeafb;"></div>
<div class="dc dk" style="left:118px;top:36px;width:49px;height:30px;background:#eaeafb;"></div>
<div class="dc" style="left:167px;top:36px;width:148px;height:30px;background:#eaeafb;"></div>
<div class="dc" style="left:315px;top:36px;width:231px;height:30px;background:#eaeafb;"></div>
<div class="dc" style="left:546px;top:36px;width:67px;height:30px;background:#eaeafb;"></div>
<div class="dc" style="left:613px;top:36px;width:81px;height:30px;background:#eaeafb;"></div>
<div class="dc" style="left:694px;top:36px;width:88px;height:30px;background:#eaeafb;"></div>
<div class="dc" style="left:782px;top:36px;width:89px;height:30px;background:#eaeafb;"></div>
<div class="dc" style="left:871px;top:36px;width:93px;height:30px;background:#eaeafb;"></div>
<div class="dc" style="left:964px;top:36px;width:66px;height:30px;background:#eaeafb;"></div>
<div class="dc" style="left:1030px;top:36px;width:66px;height:30px;background:#eaeafb;"></div>
<div class="dc" style="left:1096px;top:36px;width:66px;height:30px;background:#eaeafb;"></div>
<div class="dc" style="left:1162px;top:36px;width:88px;height:30px;background:#eaeafb;"></div>
<div class="dc" style="left:1250px;top:36px;width:66px;height:30px;background:#eaeafb;"></div>
<div class="dc" style="left:1316px;top:36px;width:66px;height:30px;background:#eaeafb;"></div>
<div class="dc" style="left:1382px;top:36px;width:66px;height:30px;background:#eaeafb;"></div>
<div class="dc" style="left:1448px;top:36px;width:66px;height:30px;background:#eaeafb;"></div>
<div class="dc" style="left:1514px;top:36px;width:66px;height:30px;background:#eaeafb;"></div>
<div class="dc" style="left:1580px;top:36px;width:89px;height:30px;background:#eaeafb;"></div>
<div class="dc" style="left:1669px;top:36px;width:81px;height:30px;background:#eaeafb;"></div>
<div class="cb" style="left:56px;top:45px"></div>
<div class="a t11" style="left:83px;top:38px;color:#0000ff">ЛС1</div>
<div class="a t11" style="left:168px;top:37px;color:#0000ff;font-size:12px;line-height:13px"><b>Новая локальная<br>смета</b></div>
<div class="dc dk" style="left:0px;top:66px;width:12px;height:30px;background:#f0f0f0;"></div>
<div class="dc dk" style="left:12px;top:66px;width:32px;height:30px;background:#fff;"></div>
<div class="dc dk" style="left:44px;top:66px;width:36px;height:30px;background:#fff;"></div>
<div class="dc dk" style="left:80px;top:66px;width:38px;height:30px;background:#fff;"></div>
<div class="dc dk" style="left:118px;top:66px;width:49px;height:30px;background:#fff;"></div>
<div class="dc" style="left:167px;top:66px;width:148px;height:30px;background:#fff;"></div>
<div class="dc" style="left:315px;top:66px;width:231px;height:30px;background:#fff;"></div>
<div class="dc" style="left:546px;top:66px;width:67px;height:30px;background:#fff;"></div>
<div class="dc" style="left:613px;top:66px;width:81px;height:30px;background:#fff;"></div>
<div class="dc" style="left:694px;top:66px;width:88px;height:30px;background:#fff;"></div>
<div class="dc" style="left:782px;top:66px;width:89px;height:30px;background:#fff;"></div>
<div class="dc" style="left:871px;top:66px;width:93px;height:30px;background:#fff;"></div>
<div class="dc" style="left:964px;top:66px;width:66px;height:30px;background:#fff;"></div>
<div class="dc" style="left:1030px;top:66px;width:66px;height:30px;background:#fff;"></div>
<div class="dc" style="left:1096px;top:66px;width:66px;height:30px;background:#fff;"></div>
<div class="dc" style="left:1162px;top:66px;width:88px;height:30px;background:#fff;"></div>
<div class="dc" style="left:1250px;top:66px;width:66px;height:30px;background:#fff;"></div>
<div class="dc" style="left:1316px;top:66px;width:66px;height:30px;background:#fff;"></div>
<div class="dc" style="left:1382px;top:66px;width:66px;height:30px;background:#fff;"></div>
<div class="dc" style="left:1448px;top:66px;width:66px;height:30px;background:#fff;"></div>
<div class="dc" style="left:1514px;top:66px;width:66px;height:30px;background:#fff;"></div>
<div class="dc" style="left:1580px;top:66px;width:89px;height:30px;background:#fff;"></div>
<div class="dc" style="left:1669px;top:66px;width:81px;height:30px;background:#fff;"></div>
<div class="cb" style="left:56px;top:75px"></div>
<div class="a t11" style="left:83px;top:68px;">1</div>
<div class="a t11" style="left:170px;top:68px;">3.10-1-1</div>
<div class="a t11" style="left:317px;top:68px;line-height:13px;color:#000">Укрупнительная сборка и установка<br>конструкций арок и ферм сегментных с</div>
<div class="a t11" style="left:548px;top:68px;line-height:13px">1<br>конструкция</div>
<div class="a t11" style="left:616px;top:68px;">4</div>
<div class="a t11" style="left:667px;width:200px;top:68px;text-align:right;">4 254,12</div>
<div class="a t11" style="left:760px;width:200px;top:68px;text-align:right;">4 254,12</div>
<div class="a t11" style="left:826px;width:200px;top:68px;text-align:right;">971,6</div>
<div class="a t11" style="left:892px;width:200px;top:68px;text-align:right;">380,84</div>
<div class="a t11" style="left:958px;width:200px;top:68px;text-align:right;">31,56</div>
<div class="a t11" style="left:1046px;width:200px;top:68px;text-align:right;">2 901,68</div>
<div class="a t11" style="left:1112px;width:200px;top:68px;text-align:right;">0</div>
<div class="a t11" style="left:1178px;width:200px;top:68px;text-align:right;">0</div>
<div class="a t11" style="left:1244px;width:200px;top:68px;text-align:right;">0</div>
<div class="a t11" style="left:1310px;width:200px;top:68px;text-align:right;">78,8</div>
<div class="a t11" style="left:1376px;width:200px;top:68px;text-align:right;">0</div>
<div class="a t11" style="left:1465px;width:200px;top:68px;text-align:right;">1 063,53</div>
<div class="a t11" style="left:1546px;width:200px;top:68px;text-align:right;">1 063,53</div>
<div class="dc dk" style="left:0px;top:96px;width:12px;height:30px;background:#f0f0f0;"></div>
<div class="dc dk" style="left:12px;top:96px;width:32px;height:30px;background:#fff;"></div>
<div class="dc dk" style="left:44px;top:96px;width:36px;height:30px;background:#fff;"></div>
<div class="dc dk" style="left:80px;top:96px;width:38px;height:30px;background:#fff;"></div>
<div class="dc dk" style="left:118px;top:96px;width:49px;height:30px;background:#fff;"></div>
<div class="dc" style="left:167px;top:96px;width:148px;height:30px;background:#fff;"></div>
<div class="dc" style="left:315px;top:96px;width:231px;height:30px;background:#fff;"></div>
<div class="dc" style="left:546px;top:96px;width:67px;height:30px;background:#fff;"></div>
<div class="dc" style="left:613px;top:96px;width:81px;height:30px;background:#fff;"></div>
<div class="dc" style="left:694px;top:96px;width:88px;height:30px;background:#fff;"></div>
<div class="dc" style="left:782px;top:96px;width:89px;height:30px;background:#fff;"></div>
<div class="dc" style="left:871px;top:96px;width:93px;height:30px;background:#fff;"></div>
<div class="dc" style="left:964px;top:96px;width:66px;height:30px;background:#fff;"></div>
<div class="dc" style="left:1030px;top:96px;width:66px;height:30px;background:#fff;"></div>
<div class="dc" style="left:1096px;top:96px;width:66px;height:30px;background:#fff;"></div>
<div class="dc" style="left:1162px;top:96px;width:88px;height:30px;background:#fff;"></div>
<div class="dc" style="left:1250px;top:96px;width:66px;height:30px;background:#fff;"></div>
<div class="dc" style="left:1316px;top:96px;width:66px;height:30px;background:#fff;"></div>
<div class="dc" style="left:1382px;top:96px;width:66px;height:30px;background:#fff;"></div>
<div class="dc" style="left:1448px;top:96px;width:66px;height:30px;background:#fff;"></div>
<div class="dc" style="left:1514px;top:96px;width:66px;height:30px;background:#fff;"></div>
<div class="dc" style="left:1580px;top:96px;width:89px;height:30px;background:#fff;"></div>
<div class="dc" style="left:1669px;top:96px;width:81px;height:30px;background:#fff;"></div>
<div class="cb" style="left:56px;top:105px"></div>
<div class="a t11" style="left:83px;top:98px;">2</div>
<div class="a t11" style="left:170px;top:98px;">3.14-1-1</div>
<div class="a t11" style="left:317px;top:98px;line-height:13px;color:#000">Установка сборных железобетонных<br>фундаментных столбиков</div>
<div class="a t11" style="left:548px;top:98px;line-height:13px">1<br>конструкция</div>
<div class="a t11" style="left:616px;top:98px;">4</div>
<div class="a t11" style="left:667px;width:200px;top:98px;text-align:right;">58,16</div>
<div class="a t11" style="left:760px;width:200px;top:98px;text-align:right;">58,16</div>
<div class="a t11" style="left:826px;width:200px;top:98px;text-align:right;">54,84</div>
<div class="a t11" style="left:892px;width:200px;top:98px;text-align:right;">3,32</div>
<div class="a t11" style="left:958px;width:200px;top:98px;text-align:right;">0,52</div>
<div class="a t11" style="left:1046px;width:200px;top:98px;text-align:right;">0</div>
<div class="a t11" style="left:1112px;width:200px;top:98px;text-align:right;">0</div>
<div class="a t11" style="left:1178px;width:200px;top:98px;text-align:right;">0</div>
<div class="a t11" style="left:1244px;width:200px;top:98px;text-align:right;">0</div>
<div class="a t11" style="left:1310px;width:200px;top:98px;text-align:right;">4,56</div>
<div class="a t11" style="left:1376px;width:200px;top:98px;text-align:right;">0</div>
<div class="a t11" style="left:1465px;width:200px;top:98px;text-align:right;">14,54</div>
<div class="a t11" style="left:1546px;width:200px;top:98px;text-align:right;">14,54</div>
<div class="dc dk" style="left:0px;top:126px;width:12px;height:30px;background:#f0f0f0;"></div>
<div class="dc dk" style="left:12px;top:126px;width:32px;height:30px;background:#fde7e7;"></div>
<div class="dc dk" style="left:44px;top:126px;width:36px;height:30px;background:#fde7e7;"></div>
<div class="dc dk" style="left:80px;top:126px;width:38px;height:30px;background:#fde7e7;"></div>
<div class="dc dk" style="left:118px;top:126px;width:49px;height:30px;background:#fde7e7;"></div>
<div class="dc" style="left:167px;top:126px;width:148px;height:30px;background:#fde7e7;"></div>
<div class="dc" style="left:315px;top:126px;width:231px;height:30px;background:#a0a0a0;"></div>
<div class="dc" style="left:546px;top:126px;width:67px;height:30px;background:#fde7e7;"></div>
<div class="dc" style="left:613px;top:126px;width:81px;height:30px;background:#fde7e7;"></div>
<div class="dc" style="left:694px;top:126px;width:88px;height:30px;background:#fde7e7;"></div>
<div class="dc" style="left:782px;top:126px;width:89px;height:30px;background:#fde7e7;"></div>
<div class="dc" style="left:871px;top:126px;width:93px;height:30px;background:#fde7e7;"></div>
<div class="dc" style="left:964px;top:126px;width:66px;height:30px;background:#fde7e7;"></div>
<div class="dc" style="left:1030px;top:126px;width:66px;height:30px;background:#fde7e7;"></div>
<div class="dc" style="left:1096px;top:126px;width:66px;height:30px;background:#fde7e7;"></div>
<div class="dc" style="left:1162px;top:126px;width:88px;height:30px;background:#fde7e7;"></div>
<div class="dc" style="left:1250px;top:126px;width:66px;height:30px;background:#fde7e7;"></div>
<div class="dc" style="left:1316px;top:126px;width:66px;height:30px;background:#fde7e7;"></div>
<div class="dc" style="left:1382px;top:126px;width:66px;height:30px;background:#fde7e7;"></div>
<div class="dc" style="left:1448px;top:126px;width:66px;height:30px;background:#fde7e7;"></div>
<div class="dc" style="left:1514px;top:126px;width:66px;height:30px;background:#fde7e7;"></div>
<div class="dc" style="left:1580px;top:126px;width:89px;height:30px;background:#fde7e7;"></div>
<div class="dc" style="left:1669px;top:126px;width:81px;height:30px;background:#fde7e7;"></div>
<div class="cb" style="left:56px;top:135px"></div>
<div class="a t11" style="left:83px;top:128px;">3</div>
<div class="a t11" style="left:170px;top:128px;">27.12.40-001, п.1</div>
<div class="a t11" style="left:317px;top:128px;line-height:13px;color:#f4f4f4">Кирпич</div>
<div class="a t11" style="left:616px;top:128px;">45</div>
<div class="a t11" style="left:667px;width:200px;top:128px;text-align:right;">7 875</div>
<div class="a t11" style="left:760px;width:200px;top:128px;text-align:right;">7 875</div>
<div class="a t11" style="left:826px;width:200px;top:128px;text-align:right;">0</div>
<div class="a t11" style="left:892px;width:200px;top:128px;text-align:right;">0</div>
<div class="a t11" style="left:958px;width:200px;top:128px;text-align:right;">0</div>
<div class="a t11" style="left:1046px;width:200px;top:128px;text-align:right;">7 875</div>
<div class="a t11" style="left:1112px;width:200px;top:128px;text-align:right;">0</div>
<div class="a t11" style="left:1178px;width:200px;top:128px;text-align:right;">0</div>
<div class="a t11" style="left:1244px;width:200px;top:128px;text-align:right;">0</div>
<div class="a t11" style="left:1310px;width:200px;top:128px;text-align:right;">0</div>
<div class="a t11" style="left:1376px;width:200px;top:128px;text-align:right;">0</div>
<div class="a t11" style="left:1465px;width:200px;top:128px;text-align:right;">175</div>
<div class="a t11" style="left:1546px;width:200px;top:128px;text-align:right;">175</div>
<svg class="a" style="left:3px;top:135px" width="7" height="12"><path d="M0 0L6 5.5L0 11z" fill="#000"/></svg>
<svg class="a" style="left:19px;top:136px" width="17" height="9" viewBox="0 0 17 9"><g fill="#f07020" stroke="#d05000" stroke-width="0.7"><rect x="0.5" y="6" width="5.2" height="2.5" rx="1.2"/><rect x="5.9" y="6" width="5.2" height="2.5" rx="1.2"/><rect x="11.3" y="6" width="5.2" height="2.5" rx="1.2"/><rect x="3.2" y="3.3" width="5.2" height="2.5" rx="1.2"/><rect x="8.6" y="3.3" width="5.2" height="2.5" rx="1.2"/><rect x="5.9" y="0.6" width="5.2" height="2.5" rx="1.2"/></g></svg>
<svg class="a" style="left:290px;top:36px" width="24" height="23" viewBox="0 0 24 23"><path d="M0 15L14 2 L23 0 L9 13z" fill="#3cc070"/><path d="M14 2L23 0" stroke="#2a9a50"/><path d="M0 15L9 13 L22 4 L18 16 L9 22z" fill="#fff" stroke="#5a8ac0" stroke-width="0.8"/><path d="M0 15 L0 17 L9 22" fill="none" stroke="#2a7a5a" stroke-width="1.2"/><text x="9" y="16" font-size="6" font-family="Liberation Sans" fill="#000">ЛС</text></svg>
</div>
<div class="a" style="left:1743px;top:83px;width:15px;height:571px;background:#f0f0f0"></div>
<div class="a" style="left:1743px;top:330px;width:15px;height:306px;background:#cdcdcd"></div>
<svg class="a" style="left:1745px;top:89px" width="10" height="7"><path d="M1 5.5L5 1.5L9 5.5" stroke="#606060" stroke-width="1.8" fill="none"/></svg>
<svg class="a" style="left:1745px;top:641px" width="10" height="7"><path d="M1 1.5L5 5.5L9 1.5" stroke="#606060" stroke-width="1.8" fill="none"/></svg>
<div class="a" style="left:6px;top:654px;width:1752px;height:15px;background:#f0f0f0"></div>
<div class="a" style="left:23px;top:654px;width:17px;height:15px;background:#cdcdcd"></div>
<svg class="a" style="left:10px;top:657px" width="8" height="10"><path d="M6 1L2 5L6 9" stroke="#606060" stroke-width="1.8" fill="none"/></svg>
<svg class="a" style="left:1730px;top:657px" width="8" height="10"><path d="M2 1L6 5L2 9" stroke="#606060" stroke-width="1.8" fill="none"/></svg>
<div class="a" style="left:5px;top:654px;width:1px;height:16px;background:#808080"></div>
<div class="a" style="left:1758px;top:82px;width:3px;height:588px;background:#f0f0f0"></div>
<div class="a" style="left:2px;top:670px;width:1760px;height:1px;background:#fff"></div>
<div class="a" style="left:77px;top:671px;width:1685px;height:1px;background:#707070"></div>
<div class="a" style="left:3px;top:672px;width:74px;height:21px;background:#f0f0f0"></div>
<div class="a" style="left:3px;top:692px;width:74px;height:1px;background:#6a6a6a"></div>
<div class="a t11" style="left:9px;top:677px">Полный вид</div>
<div class="a" style="left:77px;top:671px;width:107px;height:20px;background:#f0f0f0;border:1px solid #7a7a7a;border-top:none;box-shadow:inset 1px 0 0 #fff"></div>
<div class="a" style="left:78px;top:671px;width:105px;height:1px;background:#7a7a7a"></div>
<div class="a t11" style="left:82px;top:675px">Сокращенный вид</div>
<div class="a" style="left:184px;top:671px;width:69px;height:20px;background:#f0f0f0;border:1px solid #7a7a7a;border-top:none;box-shadow:inset 1px 0 0 #fff"></div>
<div class="a" style="left:185px;top:671px;width:67px;height:1px;background:#7a7a7a"></div>
<div class="a t11" style="left:189px;top:675px">Вид строки</div>
<div class="a" style="left:253px;top:671px;width:102px;height:20px;background:#f0f0f0;border:1px solid #7a7a7a;border-top:none;box-shadow:inset 1px 0 0 #fff"></div>
<div class="a" style="left:254px;top:671px;width:100px;height:1px;background:#7a7a7a"></div>
<div class="a t11" style="left:258px;top:675px">Объектная смета</div>
<div class="a" style="left:355px;top:671px;width:87px;height:20px;background:#f0f0f0;border:1px solid #7a7a7a;border-top:none;box-shadow:inset 1px 0 0 #fff"></div>
<div class="a" style="left:356px;top:671px;width:85px;height:1px;background:#7a7a7a"></div>
<div class="a t11" style="left:360px;top:675px">Предпросмотр</div>
<div class="a" style="left:77px;top:693px;width:1685px;height:1px;background:#a0a0a0"></div>
<div class="a" style="left:2px;top:694px;width:1760px;height:1px;background:#fff"></div>
<div class="a" style="left:3px;top:698px;width:10px;height:10px;background:#f0f0f0;border-right:1px solid #808080;border-bottom:1px solid #808080;box-shadow:inset 1px 1px 0 #fff"></div>
<svg class="a" style="left:4px;top:699px" width="8" height="8"><path d="M1 1L7 7M7 1L1 7" stroke="#202020" stroke-width="1"/></svg>
<div class="grip" style="left:7px;top:710px;height:375px"></div>
<div class="grip" style="left:10px;top:710px;height:375px"></div>
<div class="a" style="left:14px;top:697px;width:369px;height:26px;border-right:1px solid #a0a0a0;box-shadow:inset -1px 0 0 #fff"></div>
<div class="grip" style="left:18px;top:700px;height:20px"></div>
<svg class="a" style="left:24px;top:702px" width="16" height="16" viewBox="0 0 16 16"><path d="M2 0.5h9l3.5 3.5v11.5H2z" fill="#2a8a50" stroke="#1a6a3a"/><path d="M5 3h1.5M7.5 3h1.5M10 3h1.5" stroke="#fff"/><path d="M1 6v8M1.5 10l3.5-4M2 10l3.5 4M6.5 14l2.5-8 2.5 8M7.3 11.5h3.4" stroke="#fff" stroke-width="1.3" fill="none"/><path d="M13 8v1M13 11v1" stroke="#fff"/></svg>
<div class="a t12" style="left:45px;top:702px">Открыть справочник</div>
<svg class="a" style="left:170px;top:702px" width="16" height="16" viewBox="0 0 16 16"><circle cx="10" cy="5.5" r="4.3" fill="#b8cdf6" stroke="#e08a50" stroke-width="1.4"/><path d="M7 9l-5.5 5.5" stroke="#d8661c" stroke-width="2.6" stroke-linecap="round"/></svg>
<div class="a t12" style="left:190px;top:702px">Поиск в конъюнктурном анализе</div>
<div class="a" style="left:14px;top:722px;width:1748px;height:346px;background:#f7f8fa;border-left:1px solid #a0a0a0;border-top:1px solid #a0a0a0;overflow:hidden">
<div class="hc lg" style="left:0px;top:0px;width:12px;height:19px;background:#f0f0f0"></div>
<div class="hc lg" style="left:0px;top:19px;width:12px;height:96px;background:#f0f0f0"></div>
<div class="hc lg" style="left:12px;top:0px;width:550px;height:19px;background:#f0f0f0"></div>
<div class="a t11" style="left:12px;width:550px;top:3px;text-align:center">Строительный ресурс</div>
<div class="hc lg" style="left:562px;top:0px;width:389px;height:19px;background:#f0f0f0"></div>
<div class="a t11" style="left:562px;width:389px;top:3px;text-align:center">Поставщик №1</div>
<div class="hc lg" style="left:951px;top:0px;width:389px;height:19px;background:#f0f0f0"></div>
<div class="a t11" style="left:951px;width:389px;top:3px;text-align:center">Поставщик №2</div>
<div class="hc lg" style="left:1340px;top:0px;width:389px;height:19px;background:#f0f0f0"></div>
<div class="a t11" style="left:1340px;width:389px;top:3px;text-align:center">Поставщик №3</div>
<div class="hc lg" style="left:1729px;top:0px;width:100px;height:19px;background:#f0f0f0"></div>
<div class="hc lg" style="left:12px;top:19px;width:70px;height:96px;background:#f0f0f0"></div>
<div class="a t11" style="left:14px;top:60px;line-height:13px">№ п/п</div>
<div class="hc lg" style="left:82px;top:19px;width:105px;height:96px;background:#f0f0f0"></div>
<div class="a t11" style="left:84px;top:53px;line-height:13px">Код ресурса (на<br>основе ОКПД 2)</div>
<div class="hc lg" style="left:187px;top:19px;width:175px;height:96px;background:#f0f0f0"></div>
<div class="a t11" style="left:189px;top:47px;line-height:13px">Наименование оборудования и<br>материалов (тип, марка, модель,<br>артикул и др.)</div>
<div class="hc lg" style="left:362px;top:19px;width:120px;height:96px;background:#f0f0f0"></div>
<div class="a t11" style="left:364px;top:21px;line-height:13px">Номер страницы и<br>позиции. содержащие<br>обоснование<br>стоимости<br>материалов, изделий,<br>конструкций и<br>оборудования</div>
<div class="hc lg" style="left:482px;top:19px;width:80px;height:96px;background:#f0f0f0"></div>
<div class="a t11" style="left:484px;top:60px;line-height:13px">Ед. изм.</div>
<div class="hc lg" style="left:562px;top:19px;width:100px;height:96px;background:#f0f0f0"></div>
<div class="a t11" style="left:564px;top:53px;line-height:13px">Цена за единицу,<br>руб. с НДС</div>
<div class="hc lg" style="left:662px;top:19px;width:150px;height:96px;background:#f0f0f0"></div>
<div class="a t11" style="left:664px;top:60px;line-height:13px">Наименование Поставщика</div>
<div class="hc lg" style="left:812px;top:19px;width:139px;height:96px;background:#f0f0f0"></div>
<div class="a t11" style="left:814px;top:60px;line-height:13px">ИНН</div>
<div class="hc lg" style="left:951px;top:19px;width:100px;height:96px;background:#f0f0f0"></div>
<div class="a t11" style="left:953px;top:53px;line-height:13px">Цена за единицу,<br>руб. с НДС</div>
<div class="hc lg" style="left:1051px;top:19px;width:150px;height:96px;background:#f0f0f0"></div>
<div class="a t11" style="left:1053px;top:60px;line-height:13px">Наименование Поставщика</div>
<div class="hc lg" style="left:1201px;top:19px;width:139px;height:96px;background:#f0f0f0"></div>
<div class="a t11" style="left:1203px;top:60px;line-height:13px">ИНН</div>
<div class="hc lg" style="left:1340px;top:19px;width:100px;height:96px;background:#f0f0f0"></div>
<div class="a t11" style="left:1342px;top:53px;line-height:13px">Цена за единицу,<br>руб. с НДС</div>
<div class="hc lg" style="left:1440px;top:19px;width:150px;height:96px;background:#f0f0f0"></div>
<div class="a t11" style="left:1442px;top:60px;line-height:13px">Наименование Поставщика</div>
<div class="hc lg" style="left:1590px;top:19px;width:139px;height:96px;background:#f0f0f0"></div>
<div class="a t11" style="left:1592px;top:60px;line-height:13px">ИНН</div>
<div class="hc lg" style="left:1729px;top:19px;width:100px;height:96px;background:#f0f0f0"></div>
<div class="a t11" style="left:1731px;top:41px;line-height:13px">Наи<br>экс<br>за<br>НД</div>
<div class="dc dk lg" style="left:0px;top:115px;width:12px;height:32px;background:#f0f0f0"></div>
<div class="dc dk lg" style="left:12px;top:115px;width:70px;height:32px;background:#f7f8fa"></div>
<div class="dc dk lg" style="left:82px;top:115px;width:105px;height:32px;background:#f7f8fa"></div>
<div class="dc dk lg" style="left:187px;top:115px;width:175px;height:32px;background:#f7f8fa"></div>
<div class="dc dk lg" style="left:362px;top:115px;width:120px;height:32px;background:#d2d5de"></div>
<div class="dc dk lg" style="left:482px;top:115px;width:80px;height:32px;background:#f7f8fa"></div>
<div class="dc dk lg" style="left:562px;top:115px;width:100px;height:32px;background:#f7f8fa"></div>
<div class="dc dk lg" style="left:662px;top:115px;width:150px;height:32px;background:#f7f8fa"></div>
<div class="dc dk lg" style="left:812px;top:115px;width:139px;height:32px;background:#f7f8fa"></div>
<div class="dc dk lg" style="left:951px;top:115px;width:100px;height:32px;background:#f7f8fa"></div>
<div class="dc dk lg" style="left:1051px;top:115px;width:150px;height:32px;background:#f7f8fa"></div>
<div class="dc dk lg" style="left:1201px;top:115px;width:139px;height:32px;background:#f7f8fa"></div>
<div class="dc dk lg" style="left:1340px;top:115px;width:100px;height:32px;background:#f7f8fa"></div>
<div class="dc dk lg" style="left:1440px;top:115px;width:150px;height:32px;background:#f7f8fa"></div>
<div class="dc dk lg" style="left:1590px;top:115px;width:139px;height:32px;background:#f7f8fa"></div>
<div class="dc dk lg" style="left:1729px;top:115px;width:100px;height:32px;background:#f7f8fa"></div>
<svg class="a" style="left:2px;top:125px" width="6" height="11"><path d="M0 0L5 5L0 10z" fill="#000"/></svg>
<div class="a t11" style="left:12px;width:66px;top:118px;text-align:right">1</div>
<div class="a t11" style="left:84px;top:118px;line-height:13px">27.12.40-001<br><span style="color:#008000">Строительные</span></div>
<svg class="a" style="left:168px;top:121px" width="17" height="9" viewBox="0 0 17 9"><g fill="#f07020" stroke="#d05000" stroke-width="0.7"><rect x="0.5" y="6" width="5.2" height="2.5" rx="1.2"/><rect x="5.9" y="6" width="5.2" height="2.5" rx="1.2"/><rect x="11.3" y="6" width="5.2" height="2.5" rx="1.2"/><rect x="3.2" y="3.3" width="5.2" height="2.5" rx="1.2"/><rect x="8.6" y="3.3" width="5.2" height="2.5" rx="1.2"/><rect x="5.9" y="0.6" width="5.2" height="2.5" rx="1.2"/></g></svg>
<div class="a t11" style="left:189px;top:118px;">Кирпич</div>
<div class="a t11" style="left:364px;top:118px;">стр. п.</div>
<div class="a t11" style="left:562px;width:97px;top:118px;text-align:right">250,00</div>
<div class="a t11" style="left:951px;width:97px;top:118px;text-align:right">210,00</div>
<div class="a t11" style="left:1340px;width:97px;top:118px;text-align:right">215,00</div>
</div>
<div class="a" style="left:15px;top:1068px;width:1747px;height:17px;background:#f8f8f8"></div>
<div class="a" style="left:15px;top:1068px;width:17px;height:17px;background:#f0f0f0;border-right:1px solid #6a6a6a;border-bottom:1px solid #6a6a6a;box-shadow:inset 1px 1px 0 #fff,inset -1px -1px 0 #a0a0a0"></div>
<div class="a" style="left:32px;top:1068px;width:1162px;height:17px;background:#f0f0f0;border-right:1px solid #6a6a6a;border-bottom:1px solid #6a6a6a;box-shadow:inset 1px 1px 0 #fff,inset -1px -1px 0 #a0a0a0"></div>
<div class="a" style="left:1745px;top:1068px;width:17px;height:17px;background:#f0f0f0;border-right:1px solid #6a6a6a;border-bottom:1px solid #6a6a6a;box-shadow:inset 1px 1px 0 #fff,inset -1px -1px 0 #a0a0a0"></div>
<svg class="a" style="left:20px;top:1072px" width="6" height="9"><path d="M4.5 0.5v8l-4-4z" fill="#000"/></svg>
<svg class="a" style="left:1751px;top:1072px" width="6" height="9"><path d="M0.5 0.5v8l4-4z" fill="#000"/></svg>
<div class="a" style="left:2px;top:1088px;width:1760px;height:1px;background:#fff"></div>
<div class="a" style="left:3px;top:1090px;width:86px;height:26px;border-top:1px solid #a0a0a0;border-left:1px solid #a0a0a0;border-right:1px solid #fff;border-bottom:1px solid #fff"></div>
<div class="a" style="left:92px;top:1090px;width:298px;height:26px;border-top:1px solid #a0a0a0;border-left:1px solid #a0a0a0;border-right:1px solid #fff;border-bottom:1px solid #fff"></div>
<div class="a" style="left:393px;top:1090px;width:1300px;height:26px;border-top:1px solid #a0a0a0;border-left:1px solid #a0a0a0;border-right:1px solid #fff;border-bottom:1px solid #fff"></div>
<div class="a" style="left:1696px;top:1090px;width:31px;height:26px;border-top:1px solid #a0a0a0;border-left:1px solid #a0a0a0;border-right:1px solid #fff;border-bottom:1px solid #fff"></div>
<div class="a" style="left:1730px;top:1090px;width:32px;height:26px;border-top:1px solid #a0a0a0;border-left:1px solid #a0a0a0;border-right:1px solid #fff;border-bottom:1px solid #fff"></div>
<div class="a" style="left:0;top:1118px;width:1765px;height:2px;background:#8a8a8a"></div>
<div class="a" style="left:1762px;top:78px;width:2px;height:595px;background:#6e6e6e"></div>
<div class="a" style="left:1742px;top:82px;width:17px;height:1px;background:#a0a0a0"></div>
<div class="a" style="left:1758px;top:82px;width:2px;height:589px;background:#fff"></div>
<div class="a" style="left:1763px;top:0;width:1px;height:78px;background:#fff"></div>
<div class="a" style="left:1764px;top:0;width:1px;height:673px;background:#8a8a8a"></div>
<div class="a" style="left:1763px;top:673px;width:1px;height:447px;background:#8a8a8a"></div>
<div class="a t12" style="left:398px;top:1095px">ИТОГО (руб)</div>
<div class="a t12" style="left:475px;top:1095px;transform:scaleX(0.93);transform-origin:0 0">По ЛС: 12 187,28</div>
<div class="a t12" style="left:578px;top:1095px;transform:scaleX(0.94);transform-origin:0 0">По объекту: 12 187,28</div>
<svg class="a" style="left:1703px;top:1094px" width="18" height="18"><circle cx="9" cy="9" r="7" fill="#9a9a9a"/><rect x="8" y="7" width="2" height="6" fill="#fff"/><rect x="8" y="4.5" width="2" height="1.6" fill="#fff"/><path d="M2 2L16 16" stroke="#ff1010" stroke-width="1.6"/></svg>
<div class="a t12" style="left:1737px;top:1095px">RU</div>
<div class="a" style="left:502px;top:338px;width:523px;height:246px;border:3px solid #ff0000;background:#f0f0f0"></div>
<div class="a" style="left:505px;top:341px;width:517px;height:24px;background:#fff"></div>
<div class="a t12" style="left:509px;top:344px">Назначить начисления</div>
<svg class="a" style="left:1002px;top:346px" width="12" height="12"><path d="M1 1L11 11M11 1L1 11" stroke="#000" stroke-width="1.2"/></svg>
<div class="a" style="left:508px;top:365px;width:76px;height:21px;border-top:2px solid #808080;border-left:2px solid #808080;border-right:1px solid #fff;border-bottom:1px solid #fff;background:#f0f0f0"></div>
<div class="a t11" style="left:513px;top:370px">Уровень цен</div>
<div class="a" style="left:589px;top:365px;width:1px;height:21px;background:#a0a0a0"></div>
<div class="a" style="left:590px;top:365px;width:1px;height:21px;background:#fff"></div>
<div class="a" style="left:510px;top:397px;width:506px;height:139px;background:#fff;border-left:1px solid #a0a0a0;border-top:1px solid #a0a0a0"></div>
<div class="a" style="left:511px;top:398px;width:140px;height:36px;background:#f0f0f0;border-right:1px solid #a0a0a0;border-bottom:1px solid #a0a0a0;box-shadow:inset 1px 1px 0 #fff"></div>
<div class="a t11" style="left:511px;width:140px;top:409px;text-align:center">Начисление</div>
<div class="a" style="left:651px;top:398px;width:183px;height:18px;background:#f0f0f0;border-right:1px solid #a0a0a0;border-bottom:1px solid #a0a0a0;box-shadow:inset 1px 1px 0 #fff"></div>
<div class="a t11" style="left:651px;width:183px;top:400px;text-align:center">Для материалов</div>
<div class="a" style="left:834px;top:398px;width:182px;height:18px;background:#f0f0f0;border-right:1px solid #a0a0a0;border-bottom:1px solid #a0a0a0;box-shadow:inset 1px 1px 0 #fff"></div>
<div class="a t11" style="left:834px;width:182px;top:400px;text-align:center">Для оборудования</div>
<div class="a" style="left:651px;top:416px;width:88px;height:18px;background:#f0f0f0;border-right:1px solid #a0a0a0;border-bottom:1px solid #a0a0a0;box-shadow:inset 1px 1px 0 #fff"></div>
<div class="a" style="left:739px;top:416px;width:60px;height:18px;background:#f0f0f0;border-right:1px solid #a0a0a0;border-bottom:1px solid #a0a0a0;box-shadow:inset 1px 1px 0 #fff"></div>
<div class="a" style="left:799px;top:416px;width:35px;height:18px;background:#f0f0f0;border-right:1px solid #a0a0a0;border-bottom:1px solid #a0a0a0;box-shadow:inset 1px 1px 0 #fff"></div>
<div class="a" style="left:834px;top:416px;width:87px;height:18px;background:#f0f0f0;border-right:1px solid #a0a0a0;border-bottom:1px solid #a0a0a0;box-shadow:inset 1px 1px 0 #fff"></div>
<div class="a" style="left:921px;top:416px;width:60px;height:18px;background:#f0f0f0;border-right:1px solid #a0a0a0;border-bottom:1px solid #a0a0a0;box-shadow:inset 1px 1px 0 #fff"></div>
<div class="a" style="left:981px;top:416px;width:35px;height:18px;background:#f0f0f0;border-right:1px solid #a0a0a0;border-bottom:1px solid #a0a0a0;box-shadow:inset 1px 1px 0 #fff"></div>
<div class="a t11" style="left:654px;top:418px;">Значение</div>
<div class="a t11" style="left:742px;top:418px;">Тип</div>
<div class="a t11" style="left:837px;top:418px;">Значение</div>
<div class="a t11" style="left:924px;top:418px;">Тип</div>
<div class="a" style="left:809px;top:417px;width:13px;height:13px;border:1px solid #9a9a9a;background:#fff"></div>
<div class="a" style="left:991px;top:417px;width:13px;height:13px;border:1px solid #9a9a9a;background:#fff"></div>
<div class="a" style="left:511px;top:434px;width:140px;height:17px;background:#f0f0f0;border-right:1px solid #a0a0a0;border-bottom:1px solid #a0a0a0;"></div>
<div class="a t11" style="left:515px;top:436px;">Запчасти</div>
<div class="a" style="left:651px;top:434px;width:88px;height:17px;background:#fff;border-right:1px solid #a0a0a0;border-bottom:1px solid #a0a0a0;"></div>
<div class="a" style="left:739px;top:434px;width:60px;height:17px;background:#fff;border-right:1px solid #a0a0a0;border-bottom:1px solid #a0a0a0;"></div>
<div class="a" style="left:799px;top:434px;width:35px;height:17px;background:#fff;border-right:1px solid #a0a0a0;border-bottom:1px solid #a0a0a0;"></div>
<div class="a" style="left:834px;top:434px;width:87px;height:17px;background:#fff;border-right:1px solid #a0a0a0;border-bottom:1px solid #a0a0a0;"></div>
<div class="a" style="left:921px;top:434px;width:60px;height:17px;background:#fff;border-right:1px solid #a0a0a0;border-bottom:1px solid #a0a0a0;"></div>
<div class="a" style="left:981px;top:434px;width:35px;height:17px;background:#fff;border-right:1px solid #a0a0a0;border-bottom:1px solid #a0a0a0;"></div>
<div class="a t11" style="left:655px;top:436px;">0</div>
<div class="a t11" style="left:743px;top:436px;">%</div>
<div class="a t11" style="left:838px;top:436px;">0</div>
<div class="a t11" style="left:925px;top:436px;">%</div>
<div class="a" style="left:809px;top:435px;width:13px;height:13px;border:1px solid #9a9a9a;background:#fff"></div>
<div class="a" style="left:991px;top:435px;width:13px;height:13px;border:1px solid #9a9a9a;background:#fff"></div>
<div class="a" style="left:511px;top:451px;width:140px;height:17px;background:#f0f0f0;border-right:1px solid #a0a0a0;border-bottom:1px solid #a0a0a0;"></div>
<div class="a t11" style="left:515px;top:453px;">Наценка снаба</div>
<div class="a" style="left:651px;top:451px;width:88px;height:17px;background:#fff;border-right:1px solid #a0a0a0;border-bottom:1px solid #a0a0a0;"></div>
<div class="a" style="left:739px;top:451px;width:60px;height:17px;background:#fff;border-right:1px solid #a0a0a0;border-bottom:1px solid #a0a0a0;"></div>
<div class="a" style="left:799px;top:451px;width:35px;height:17px;background:#fff;border-right:1px solid #a0a0a0;border-bottom:1px solid #a0a0a0;"></div>
<div class="a" style="left:834px;top:451px;width:87px;height:17px;background:#fff;border-right:1px solid #a0a0a0;border-bottom:1px solid #a0a0a0;"></div>
<div class="a" style="left:921px;top:451px;width:60px;height:17px;background:#fff;border-right:1px solid #a0a0a0;border-bottom:1px solid #a0a0a0;"></div>
<div class="a" style="left:981px;top:451px;width:35px;height:17px;background:#fff;border-right:1px solid #a0a0a0;border-bottom:1px solid #a0a0a0;"></div>
<div class="a t11" style="left:655px;top:453px;">0</div>
<div class="a t11" style="left:743px;top:453px;">%</div>
<div class="a t11" style="left:838px;top:453px;">0</div>
<div class="a t11" style="left:925px;top:453px;">%</div>
<div class="a" style="left:809px;top:452px;width:13px;height:13px;border:1px solid #9a9a9a;background:#fff"></div>
<div class="a" style="left:991px;top:452px;width:13px;height:13px;border:1px solid #9a9a9a;background:#fff"></div>
<div class="a" style="left:511px;top:468px;width:140px;height:17px;background:#f0f0f0;border-right:1px solid #a0a0a0;border-bottom:1px solid #a0a0a0;"></div>
<div class="a t11" style="left:515px;top:470px;">Комплектация</div>
<div class="a" style="left:651px;top:468px;width:88px;height:17px;background:#fff;border-right:1px solid #a0a0a0;border-bottom:1px solid #a0a0a0;"></div>
<div class="a" style="left:739px;top:468px;width:60px;height:17px;background:#fff;border-right:1px solid #a0a0a0;border-bottom:1px solid #a0a0a0;"></div>
<div class="a" style="left:799px;top:468px;width:35px;height:17px;background:#fff;border-right:1px solid #a0a0a0;border-bottom:1px solid #a0a0a0;"></div>
<div class="a" style="left:834px;top:468px;width:87px;height:17px;background:#fff;border-right:1px solid #a0a0a0;border-bottom:1px solid #a0a0a0;"></div>
<div class="a" style="left:921px;top:468px;width:60px;height:17px;background:#fff;border-right:1px solid #a0a0a0;border-bottom:1px solid #a0a0a0;"></div>
<div class="a" style="left:981px;top:468px;width:35px;height:17px;background:#fff;border-right:1px solid #a0a0a0;border-bottom:1px solid #a0a0a0;"></div>
<div class="a t11" style="left:655px;top:470px;">0</div>
<div class="a t11" style="left:743px;top:470px;">%</div>
<div class="a t11" style="left:838px;top:470px;">0</div>
<div class="a t11" style="left:925px;top:470px;">%</div>
<div class="a" style="left:809px;top:469px;width:13px;height:13px;border:1px solid #9a9a9a;background:#fff"></div>
<div class="a" style="left:991px;top:469px;width:13px;height:13px;border:1px solid #9a9a9a;background:#fff"></div>
<div class="a" style="left:511px;top:485px;width:140px;height:17px;background:#f0f0f0;border-right:1px solid #a0a0a0;border-bottom:1px solid #a0a0a0;"></div>
<div class="a t11" style="left:515px;top:487px;">Тара, упаковка</div>
<div class="a" style="left:651px;top:485px;width:88px;height:17px;background:#fff;border-right:1px solid #a0a0a0;border-bottom:1px solid #a0a0a0;"></div>
<div class="a" style="left:739px;top:485px;width:60px;height:17px;background:#fff;border-right:1px solid #a0a0a0;border-bottom:1px solid #a0a0a0;"></div>
<div class="a" style="left:799px;top:485px;width:35px;height:17px;background:#fff;border-right:1px solid #a0a0a0;border-bottom:1px solid #a0a0a0;"></div>
<div class="a" style="left:834px;top:485px;width:87px;height:17px;background:#fff;border-right:1px solid #a0a0a0;border-bottom:1px solid #a0a0a0;"></div>
<div class="a" style="left:921px;top:485px;width:60px;height:17px;background:#fff;border-right:1px solid #a0a0a0;border-bottom:1px solid #a0a0a0;"></div>
<div class="a" style="left:981px;top:485px;width:35px;height:17px;background:#fff;border-right:1px solid #a0a0a0;border-bottom:1px solid #a0a0a0;"></div>
<div class="a t11" style="left:655px;top:487px;">0</div>
<div class="a t11" style="left:743px;top:487px;">%</div>
<div class="a t11" style="left:838px;top:487px;">0</div>
<div class="a t11" style="left:925px;top:487px;">%</div>
<div class="a" style="left:809px;top:486px;width:13px;height:13px;border:1px solid #9a9a9a;background:#fff"></div>
<div class="a" style="left:991px;top:486px;width:13px;height:13px;border:1px solid #9a9a9a;background:#fff"></div>
<div class="a" style="left:511px;top:502px;width:140px;height:17px;background:#f0f0f0;border-right:1px solid #a0a0a0;border-bottom:1px solid #a0a0a0;"></div>
<div class="a t11" style="left:515px;top:504px;">Транспортные</div>
<div class="a" style="left:651px;top:502px;width:88px;height:17px;background:#fff;border-right:1px solid #a0a0a0;border-bottom:1px solid #a0a0a0;"></div>
<div class="a" style="left:739px;top:502px;width:60px;height:17px;background:#fff;border-right:1px solid #a0a0a0;border-bottom:1px solid #a0a0a0;"></div>
<div class="a" style="left:799px;top:502px;width:35px;height:17px;background:#fff;border-right:1px solid #a0a0a0;border-bottom:1px solid #a0a0a0;"></div>
<div class="a" style="left:834px;top:502px;width:87px;height:17px;background:#fff;border-right:1px solid #a0a0a0;border-bottom:1px solid #a0a0a0;"></div>
<div class="a" style="left:921px;top:502px;width:60px;height:17px;background:#fff;border-right:1px solid #a0a0a0;border-bottom:1px solid #a0a0a0;"></div>
<div class="a" style="left:981px;top:502px;width:35px;height:17px;background:#fff;border-right:1px solid #a0a0a0;border-bottom:1px solid #a0a0a0;"></div>
<div class="a t11" style="left:655px;top:504px;">0</div>
<div class="a t11" style="left:743px;top:504px;">%</div>
<div class="a t11" style="left:838px;top:504px;">0</div>
<div class="a t11" style="left:925px;top:504px;">%</div>
<div class="a" style="left:809px;top:503px;width:13px;height:13px;border:1px solid #9a9a9a;background:#fff"></div>
<div class="a" style="left:991px;top:503px;width:13px;height:13px;border:1px solid #9a9a9a;background:#fff"></div>
<div class="a" style="left:511px;top:519px;width:140px;height:17px;background:#f0f0f0;border-right:1px solid #a0a0a0;border-bottom:1px solid #a0a0a0;"></div>
<div class="a t11" style="left:515px;top:521px;">Заг.-складск.</div>
<div class="a" style="left:651px;top:519px;width:88px;height:17px;background:#0078d7;border-right:1px solid #a0a0a0;border-bottom:1px solid #a0a0a0;"></div>
<div class="a" style="left:739px;top:519px;width:60px;height:17px;background:#fff;border-right:1px solid #a0a0a0;border-bottom:1px solid #a0a0a0;"></div>
<div class="a" style="left:799px;top:519px;width:35px;height:17px;background:#fff;border-right:1px solid #a0a0a0;border-bottom:1px solid #a0a0a0;"></div>
<div class="a" style="left:834px;top:519px;width:87px;height:17px;background:#fff;border-right:1px solid #a0a0a0;border-bottom:1px solid #a0a0a0;"></div>
<div class="a" style="left:921px;top:519px;width:60px;height:17px;background:#fff;border-right:1px solid #a0a0a0;border-bottom:1px solid #a0a0a0;"></div>
<div class="a" style="left:981px;top:519px;width:35px;height:17px;background:#fff;border-right:1px solid #a0a0a0;border-bottom:1px solid #a0a0a0;"></div>
<div class="a t11" style="left:655px;top:521px;color:#fff">1,2</div>
<div class="a t11" style="left:743px;top:521px;">%</div>
<div class="a t11" style="left:838px;top:521px;">0</div>
<div class="a t11" style="left:925px;top:521px;">%</div>
<div class="a" style="left:809px;top:520px;width:13px;height:13px;border:1px solid #9a9a9a;background:#fff"></div><svg class="a" style="left:811px;top:522px" width="9" height="9"><path d="M1 4.5L3.5 7L8 1.5" stroke="#000" stroke-width="1.8" fill="none"/></svg>
<div class="a" style="left:991px;top:520px;width:13px;height:13px;border:1px solid #9a9a9a;background:#fff"></div>
<div class="a" style="left:505px;top:542px;width:517px;height:1px;background:#a0a0a0"></div>
<div class="a" style="left:505px;top:543px;width:517px;height:1px;background:#fff"></div>
<div class="a" style="left:861px;top:549px;width:75px;height:25px;background:#f0f0f0;border-top:1px solid #fff;border-left:1px solid #fff;border-right:1px solid #696969;border-bottom:1px solid #696969;box-shadow:inset -1px -1px 0 #a0a0a0"></div>
<div class="a t11" style="left:861px;width:75px;top:555px;text-align:center">Применить</div>
<div class="a" style="left:942px;top:549px;width:75px;height:25px;background:#f0f0f0;border-top:1px solid #fff;border-left:1px solid #fff;border-right:1px solid #696969;border-bottom:1px solid #696969;box-shadow:inset -1px -1px 0 #a0a0a0"></div>
<div class="a t11" style="left:942px;width:75px;top:555px;text-align:center">Отмена</div>
</body></html>
